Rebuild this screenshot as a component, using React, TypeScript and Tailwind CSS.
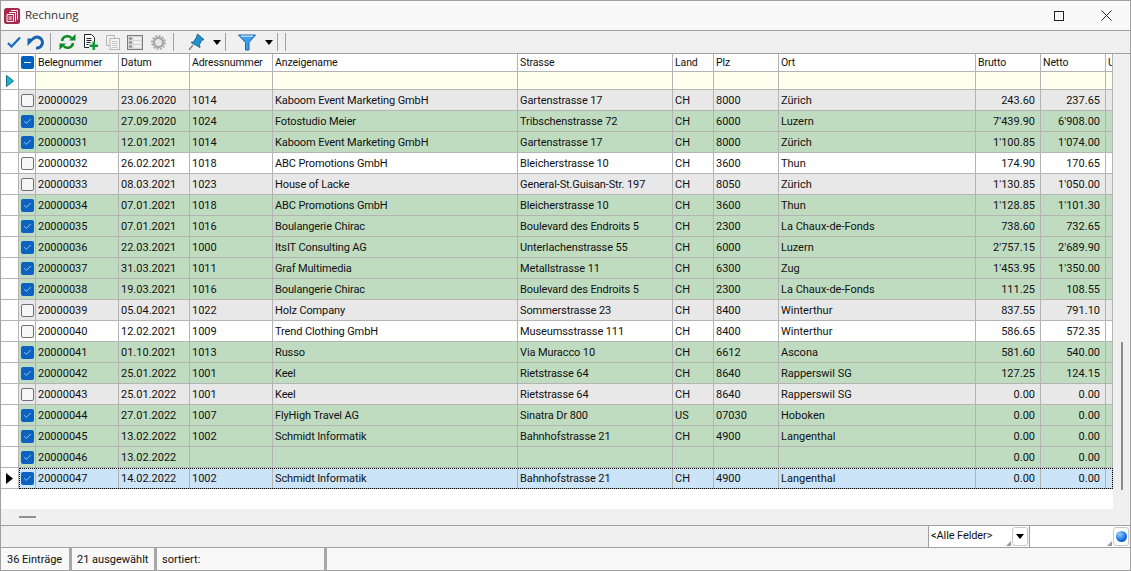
import { Check } from "lucide-react"

type Row = [string, string, string, string, string, string, string, string, string, string, boolean, string]

const GRID = "grid grid-cols-[18px_17px_83px_71px_83px_245px_155px_41px_65px_197px_65px_65px_7px]"

const COLUMNS = ["Belegnummer", "Datum", "Adressnummer", "Anzeigename", "Strasse", "Land", "Plz", "Ort", "Brutto", "Netto", "U"]

const ROWS: Row[] = [
  ["20000029", "23.06.2020", "1014", "Kaboom Event Marketing GmbH", "Gartenstrasse 17", "CH", "8000", "Zürich", "243.60", "237.65", false, "bg-[#e8e8e8]"],
  ["20000030", "27.09.2020", "1024", "Fotostudio Meier", "Tribschenstrasse 72", "CH", "6000", "Luzern", "7'439.90", "6'908.00", true, "bg-[#c0dcc0]"],
  ["20000031", "12.01.2021", "1014", "Kaboom Event Marketing GmbH", "Gartenstrasse 17", "CH", "8000", "Zürich", "1'100.85", "1'074.00", true, "bg-[#c0dcc0]"],
  ["20000032", "26.02.2021", "1018", "ABC Promotions GmbH", "Bleicherstrasse 10", "CH", "3600", "Thun", "174.90", "170.65", false, "bg-white"],
  ["20000033", "08.03.2021", "1023", "House of Lacke", "General-St.Guisan-Str. 197", "CH", "8050", "Zürich", "1'130.85", "1'050.00", false, "bg-[#e8e8e8]"],
  ["20000034", "07.01.2021", "1018", "ABC Promotions GmbH", "Bleicherstrasse 10", "CH", "3600", "Thun", "1'128.85", "1'101.30", true, "bg-[#c0dcc0]"],
  ["20000035", "07.01.2021", "1016", "Boulangerie Chirac", "Boulevard des Endroits 5", "CH", "2300", "La Chaux-de-Fonds", "738.60", "732.65", true, "bg-[#c0dcc0]"],
  ["20000036", "22.03.2021", "1000", "ItsIT Consulting AG", "Unterlachenstrasse 55", "CH", "6000", "Luzern", "2'757.15", "2'689.90", true, "bg-[#c0dcc0]"],
  ["20000037", "31.03.2021", "1011", "Graf Multimedia", "Metallstrasse 11", "CH", "6300", "Zug", "1'453.95", "1'350.00", true, "bg-[#c0dcc0]"],
  ["20000038", "19.03.2021", "1016", "Boulangerie Chirac", "Boulevard des Endroits 5", "CH", "2300", "La Chaux-de-Fonds", "111.25", "108.55", true, "bg-[#c0dcc0]"],
  ["20000039", "05.04.2021", "1022", "Holz Company", "Sommerstrasse 23", "CH", "8400", "Winterthur", "837.55", "791.10", false, "bg-[#e8e8e8]"],
  ["20000040", "12.02.2021", "1009", "Trend Clothing GmbH", "Museumsstrasse 111", "CH", "8400", "Winterthur", "586.65", "572.35", false, "bg-white"],
  ["20000041", "01.10.2021", "1013", "Russo", "Via Muracco 10", "CH", "6612", "Ascona", "581.60", "540.00", true, "bg-[#c0dcc0]"],
  ["20000042", "25.01.2022", "1001", "Keel", "Rietstrasse 64", "CH", "8640", "Rapperswil SG", "127.25", "124.15", true, "bg-[#c0dcc0]"],
  ["20000043", "25.01.2022", "1001", "Keel", "Rietstrasse 64", "CH", "8640", "Rapperswil SG", "0.00", "0.00", false, "bg-[#e8e8e8]"],
  ["20000044", "27.01.2022", "1007", "FlyHigh Travel AG", "Sinatra Dr 800", "US", "07030", "Hoboken", "0.00", "0.00", true, "bg-[#c0dcc0]"],
  ["20000045", "13.02.2022", "1002", "Schmidt Informatik", "Bahnhofstrasse 21", "CH", "4900", "Langenthal", "0.00", "0.00", true, "bg-[#c0dcc0]"],
  ["20000046", "13.02.2022", "", "", "", "", "", "", "0.00", "0.00", true, "bg-[#c0dcc0]"],
  ["20000047", "14.02.2022", "1002", "Schmidt Informatik", "Bahnhofstrasse 21", "CH", "4900", "Langenthal", "0.00", "0.00", true, "bg-[#cce4f7]"],
]

function Logo() {
  return (
    <svg width="16" height="16" viewBox="0 0 16 16">
      <rect width="16" height="16" rx="2.5" fill="#a32a4c" />
      <path d="M7 2.5h6.5v9M5 4.5h6.5v9M3 6.5h6.5v7H3z" fill="none" stroke="#fff" strokeWidth="1" />
      <path d="M4.5 9h3.5M4.5 11h3.5" stroke="#fff" />
    </svg>
  )
}

function Tool({ w, children }: { w: string; children?: React.ReactNode }) {
  return <div className={`${w} flex h-full shrink-0 items-center justify-center`}>{children}</div>
}

function Sep() {
  return <div className="h-[18px] w-px shrink-0 bg-[#a0a0a0]" />
}

function Arrow() {
  return (
    <svg width="8" height="5" viewBox="0 0 8 5">
      <path d="M0 0h8L4 5z" fill="#000" />
    </svg>
  )
}

function Toolbar() {
  return (
    <div className="flex h-[23px] shrink-0 items-center border-b border-[#a0a0a0] bg-[#f0f0f0] pl-[3px]">
      <Tool w="w-[19px]">
        <svg width="14" height="12" viewBox="0 0 14 12">
          <path d="M1 7l3.5 3.5L13 1.5" fill="none" stroke="#1f6fc0" strokeWidth="2.4" />
        </svg>
      </Tool>
      <Tool w="w-[24px]">
        <svg width="17" height="15" viewBox="0 0 17 15">
          <path d="M9 13A5.5 5.500 0 1 0 5.500 4.300" fill="none" stroke="#1a62b0" strokeWidth="3" />
          <path d="M.5 3.500h7.500L.5 11z" fill="#1a62b0" />
        </svg>
      </Tool>
      <div className="w-[3px]" />
      <Sep />
      <div className="w-[7px]" />
      <Tool w="w-[18px]">
        <svg width="17" height="16" viewBox="0 0 17 16">
          <path d="M3 7a5.5 5.5 0 0 1 9.5-3" fill="none" stroke="#0d8a22" strokeWidth="2.4" />
          <path d="M10 6.5h6.5V0z" fill="#0d8a22" />
          <path d="M14 9a5.5 5.5 0 0 1-9.5 3" fill="none" stroke="#0d8a22" strokeWidth="2.4" />
          <path d="M7 9.5H.5V16z" fill="#0d8a22" />
        </svg>
      </Tool>
      <div className="w-[6px]" />
      <Tool w="w-[18px]">
        <svg width="16" height="16" viewBox="0 0 16 16">
          <path d="M1.5.5h7l3 3v5M6 13.5H1.5V.5" fill="#fff" stroke="#222" />
          <path d="M3.5 4.5h5M3.5 6.5h5M3.5 8.5h4M3.5 10.5h2" stroke="#222" />
          <path d="M9.5 7.5h2.5v3h3v2.5h-3v3H9.500v-3h-3v-2.500h3z" fill="#109a3a" />
        </svg>
      </Tool>
      <div className="w-[4px]" />
      <Tool w="w-[18px]">
        <svg width="14" height="15" viewBox="0 0 14 15">
          <path d="M.5.5h8v3M.5.5v10h3" fill="none" stroke="#b5b5b5" />
          <rect x="4" y="3.500" width="9.500" height="11" fill="#f4f4f4" stroke="#b5b5b5" />
          <path d="M6 6.500h5.500M6 8.500h5.500M6 10.500h5.500M6 12.500h5.500" stroke="#c4c4c4" />
        </svg>
      </Tool>
      <div className="w-[4px]" />
      <Tool w="w-[18px]">
        <svg width="16" height="15" viewBox="0 0 16 15">
          <rect x=".5" y=".5" width="15" height="14" fill="#d8d8d8" stroke="#7c7c7c" />
          <path d="M2 3.500h3M2 7.500h3M2 11.500h3" stroke="#8a8a8a" strokeWidth="2" />
          <path d="M6.500 3.500h7.500M6.500 7.500h7.500M6.500 11.500h7.500" stroke="#f8f8f8" strokeWidth="2" />
        </svg>
      </Tool>
      <div className="w-[6px]" />
      <Tool w="w-[16px]">
        <svg width="15" height="15" viewBox="0 0 15 15">
          <circle cx="7.500" cy="7.500" r="6.600" fill="none" stroke="#a6a6a6" strokeWidth="1.600" strokeDasharray="2 1.450" />
          <circle cx="7.500" cy="7.500" r="4.500" fill="none" stroke="#a6a6a6" strokeWidth="2.600" />
          <circle cx="7.500" cy="7.500" r="3.200" fill="#e6e6e6" />
        </svg>
      </Tool>
      <div className="w-[7px]" />
      <Sep />
      <div className="w-[13px]" />
      <Tool w="w-[18px]">
        <svg width="17" height="18" viewBox="0 0 17 18">
          <path d="M5 12L1 17" stroke="#8c8c8c" strokeWidth="1.600" />
          <path d="M9.500 1l6.500 5.500-2.500 1-2 4 .5 3L3 9.500l3-1 2.500-4.500z" fill="#1c93cf" stroke="#14557f" strokeWidth=".8" />
        </svg>
      </Tool>
      <div className="w-[5px]" />
      <Tool w="w-[13px]"><Arrow /></Tool>
      <div className="w-[2px]" />
      <Sep />
      <div className="w-[11px]" />
      <Tool w="w-[19px]">
        <svg width="18" height="17" viewBox="0 0 18 17">
          <path d="M.5 1h17L11 8.500V16H7.500V8.500z" fill="#3f9ee8" stroke="#1766b0" />
          <path d="M3 2.200h12" stroke="#bfe2fb" strokeWidth="1.400" />
        </svg>
      </Tool>
      <div className="w-[7px]" />
      <Tool w="w-[12px]"><Arrow /></Tool>
      <div className="w-[2px]" />
      <Sep />
      <div className="w-[7px]" />
      <Sep />
    </div>
  )
}

function Checkbox({ checked, dash }: { checked?: boolean; dash?: boolean }) {
  if (dash) {
    return (
      <div className="flex size-[13px] items-center justify-center rounded-[2px] bg-[#0060c0]">
        <div className="h-px w-[7px] bg-white" />
      </div>
    )
  }
  if (checked) {
    return (
      <div className="flex size-[13px] items-center justify-center rounded-[2px] bg-[#0b62c1]">
        <Check size={9} color="#cfe3f7" strokeWidth={2} />
      </div>
    )
  }
  return <div className="size-[13px] rounded-[2px] border border-[#707070] bg-[#f6f6f6]" />
}

function Cell({ children, right, className = "" }: { children?: React.ReactNode; right?: boolean; className?: string }) {
  return (
    <div
      className={`flex items-center overflow-hidden whitespace-nowrap border-r border-b border-[#b4b4b4] pl-[2px] ${
        right ? "justify-end pr-[5px]" : ""
      } ${className}`}
    >
      {children}
    </div>
  )
}

function HeaderRow() {
  return (
    <div className={`${GRID} h-[18px] bg-white text-[10.5px] tracking-[-0.1px]`}>
      <Cell />
      <Cell className="justify-center !pl-0">
        <Checkbox dash />
      </Cell>
      {COLUMNS.map((c) => (
        <Cell key={c} className="pt-px">
          {c}
        </Cell>
      ))}
    </div>
  )
}

function FilterRow() {
  return (
    <div className={`${GRID} h-[18px] bg-[#ffffee]`}>
      <Cell className="justify-center bg-white !pl-0">
        <svg width="8" height="12" viewBox="0 0 8 12">
          <path d="M.5.5L7.500 6 .5 11.500z" fill="#1fb5c9" stroke="#0d6f85" />
        </svg>
      </Cell>
      <Cell className="bg-white" />
      {COLUMNS.map((c) => (
        <Cell key={c} />
      ))}
    </div>
  )
}

function DataRow({ row, current }: { row: Row; current: boolean }) {
  const [nr, datum, adr, name, strasse, land, plz, ort, brutto, netto, checked, bg] = row
  return (
    <div className={`${GRID} relative h-[21px] ${bg}`}>
      <Cell className="justify-center bg-white !pl-0">
        {current && (
          <svg width="7" height="11" viewBox="0 0 7 11">
            <path d="M0 0l7 5.500L0 11z" fill="#000" />
          </svg>
        )}
      </Cell>
      <Cell className="justify-center !pl-0">
        <Checkbox checked={checked} />
      </Cell>
      <Cell className="pt-[2px]">{nr}</Cell>
      <Cell className="pt-[2px]">{datum}</Cell>
      <Cell className="pt-[2px]">{adr}</Cell>
      <Cell className="pt-[2px] tracking-[-0.12px]">{name}</Cell>
      <Cell className="pt-[2px] tracking-[-0.1px]">{strasse}</Cell>
      <Cell className="pt-[2px]">{land}</Cell>
      <Cell className="pt-[2px]">{plz}</Cell>
      <Cell className="pt-[2px]">{ort}</Cell>
      <Cell right className="pt-[2px]">{brutto}</Cell>
      <Cell right className="pt-[2px]">{netto}</Cell>
      <Cell />
      {current && (
        <div className="pointer-events-none absolute top-0 right-0 bottom-0 left-[18px] border border-dotted border-black" />
      )}
    </div>
  )
}

function Grip() {
  return (
    <svg className="absolute right-[1px] bottom-[1px]" width="5" height="5" viewBox="0 0 5 5">
      <path d="M5 0v5H0z" fill="#9a9a9a" />
    </svg>
  )
}

function FieldButton({ children }: { children: React.ReactNode }) {
  return (
    <div className="my-[1px] flex w-[16px] items-center justify-center rounded-[3px] border border-[#c8c8c8] bg-white">
      {children}
    </div>
  )
}

function SearchBar() {
  return (
    <div className="flex h-[22px] shrink-0 justify-end border-b border-[#a0a0a0] bg-[#f0f0f0] pr-[1px]">
      <div className="relative flex w-[84px] items-center border-l border-[#a0a0a0] bg-white pl-[2px] tracking-[-0.1px]">
        &lt;Alle Felder&gt;
        <Grip />
      </div>
      <div className="flex bg-white">
        <FieldButton>
          <Arrow />
        </FieldButton>
      </div>
      <div className="relative ml-[1px] w-[84px] border-l border-[#a0a0a0] bg-white">
        <Grip />
      </div>
      <div className="flex bg-white">
        <FieldButton>
          <div className="size-[11px] rounded-full bg-[radial-gradient(circle_at_35%_30%,#9ad0ff,#0f6fe0_60%,#0a3f9e)]" />
        </FieldButton>
      </div>
    </div>
  )
}

function StatusPart({ w, children }: { w: string; children?: React.ReactNode }) {
  return <div className={`${w} flex h-full shrink-0 items-center border-r-[3px] border-[#a8a8a8] pt-[2px]`}>{children}</div>
}

export default function App() {
  return (
    <div className="flex h-[571px] w-[1131px] flex-col overflow-hidden border border-[#a0a0a0] bg-[#f0f0f0] font-['Roboto',sans-serif] text-[11px] text-[#111]">
      <div className="flex h-[30px] shrink-0 items-center border-b border-[#a0a0a0] bg-[#f9f9f9] pl-[3px]">
        <Logo />
        <span className="ml-[5px] pb-[2px] font-['Open_Sans',sans-serif] text-[11.5px] text-[#333]">Rechnung</span>
        <div className="ml-auto flex items-center">
          <div className="size-[10px] border border-[#222]" />
          <svg className="mr-[18px] ml-[37px]" width="11" height="11" viewBox="0 0 11 11">
            <path d="M.5.5l10 10M10.500.5l-10 10" stroke="#222" />
          </svg>
        </div>
      </div>
      <Toolbar />
      <div className="flex min-h-0 flex-1">
        <div className="flex w-[1112px] flex-col bg-white">
          <HeaderRow />
          <FilterRow />
          {ROWS.map((r) => (
            <DataRow key={r[0]} row={r} current={r[0] === "20000047"} />
          ))}
        </div>
        <div className="flex flex-1 flex-col items-center justify-end pb-[19px]">
          <div className="h-[148px] w-[2px] bg-[#8a8a8a]" />
        </div>
      </div>
      <div className="flex h-[17px] shrink-0 items-center border-b border-[#a0a0a0] bg-[#f0f0f0] pl-[18px]">
        <div className="h-[2px] w-[17px] bg-[#8f8f8f]" />
      </div>
      <SearchBar />
      <div className="flex h-[22px] shrink-0 items-center bg-[#f8f8f8]">
        <StatusPart w="w-[71px] pl-[6px]">36 Einträge</StatusPart>
        <StatusPart w="w-[85px] pl-[5px]">21 ausgewählt</StatusPart>
        <StatusPart w="w-[170px] pl-[5px]">sortiert:</StatusPart>
      </div>
    </div>
  )
}
